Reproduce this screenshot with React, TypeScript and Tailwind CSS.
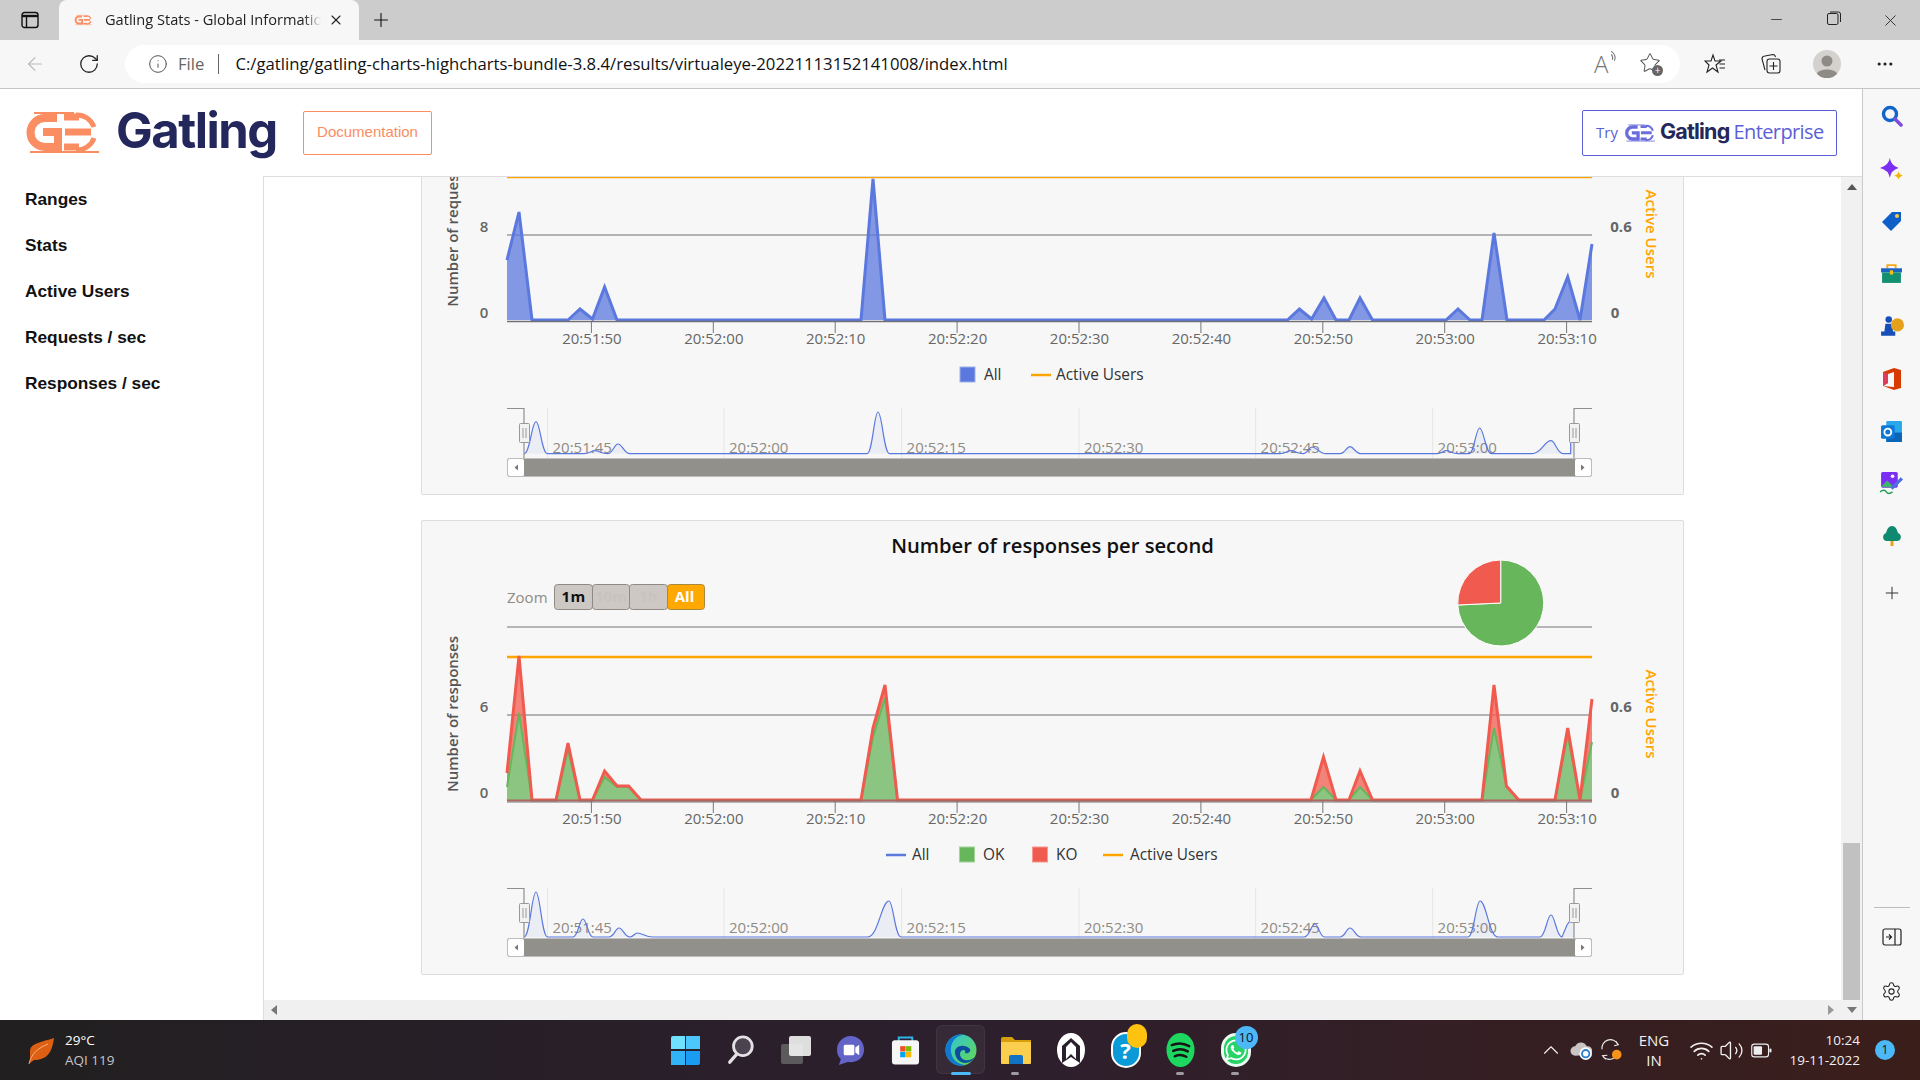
import { ArrowLeft, ChevronUp, Info, Minus, MoreHorizontal, Plus, RotateCw, Settings, Star, Volume2, Wifi, X } from 'lucide-react';
import { FaWhatsapp } from 'react-icons/fa';

type Pt = [number, number];

const X_TICKS: [number, string][] = [
  [591.4, '20:51:50'], [713.3, '20:52:00'], [835.2, '20:52:10'], [957.1, '20:52:20'], [1079, '20:52:30'],
  [1200.9, '20:52:40'], [1322.8, '20:52:50'], [1444.7, '20:53:00'], [1566.6, '20:53:10'],
];
const NAV_TICKS: [number, string][] = [
  [547.5, '20:51:45'], [724, '20:52:00'], [901.6, '20:52:15'], [1079, '20:52:30'], [1255.6, '20:52:45'], [1432.6, '20:53:00'],
];

const FONT = "'Open Sans', sans-serif";

const poly = (pts: Pt[]) => pts.map((p) => p.join(',')).join(' ');
const area = (pts: Pt[], base: number) => `M${pts[0][0]} ${base} L${pts.map((p) => p.join(' ')).join(' L')} L${pts[pts.length - 1][0]} ${base} Z`;

// requests chart, written with its own page y, shifted onto the shared axes
const requestPts: Pt[] = ([
  [507, 260], [519, 212], [532, 320], [568, 320], [580, 309], [592.5, 319], [604.6, 287], [617, 320], [861, 320], [873, 179], [885, 320],
  [1287.5, 320], [1299.4, 309], [1311.6, 319], [1324, 298], [1336, 320], [1349, 320], [1360, 298], [1372.5, 320], [1446, 320], [1458, 309],
  [1470, 320], [1482, 320], [1494, 233], [1507, 320], [1544, 320], [1555, 309], [1567.7, 277], [1580, 320], [1592, 244],
] as Pt[]).map(([x, y]) => [x, y + 480] as Pt);

const koPts: Pt[] = [
  [507, 773], [519, 656], [532, 800], [556, 800], [568, 743], [580, 800], [592.5, 800], [604.6, 771], [617, 786], [628.6, 786], [641, 800],
  [861, 800], [873, 728], [885, 685], [897.5, 800], [1311, 800], [1323.5, 757], [1336, 800], [1349, 800], [1360, 771], [1372.5, 800],
  [1482, 800], [1494, 685], [1506.4, 786], [1518.7, 800], [1555, 800], [1567.7, 728], [1580, 800], [1592, 699],
];
const okPts: Pt[] = [
  [507, 787], [519, 713], [532, 800], [556, 800], [568, 750], [580, 800], [592.5, 800], [604.6, 777], [617, 787], [628.6, 787], [641, 800],
  [861, 800], [873, 737], [885, 698], [897.5, 800], [1311, 800], [1323.5, 787], [1336, 800], [1349, 800], [1360, 787], [1372.5, 800],
  [1482, 800], [1494, 728], [1506.4, 786], [1518.7, 800], [1555, 800], [1567.7, 735], [1580, 800], [1592, 742],
];

// navigator bumps: start x, peak x, end x, peak y
type Bump = [number, number, number, number];
const navPath = (bumps: Bump[], base: number, endX: number) => {
  let d = `M524 ${base}`;
  for (const [a, p, b, y] of bumps) {
    d += ` L${a} ${base} C${a + (p - a) * 0.5} ${base} ${p - (p - a) * 0.35} ${y} ${p} ${y} C${p + (b - p) * 0.35} ${y} ${b - (b - p) * 0.5} ${base} ${b} ${base}`;
  }
  return `${d} L${endX} ${base}`;
};

const navRequests: Bump[] = [
  [524, 536, 547.5, 901.7], [584, 595, 607.5, 930.7], [607.5, 618, 630, 924], [867, 878, 889.6, 892], [1280, 1291, 1303, 930.7],
  [1303, 1312, 1326, 927], [1340, 1350, 1361, 926.7], [1437, 1446, 1458, 930.7], [1469, 1479.6, 1491.5, 908], [1532, 1551, 1563, 920.7],
];
const navResponses: Bump[] = [
  [524, 536, 547.6, 892], [573, 583, 593, 919], [609, 619, 630, 928], [630, 637, 653, 933], [867.5, 889, 901, 901], [1304, 1315, 1324.5, 924],
  [1340, 1350, 1361, 928], [1468, 1480, 1498, 901], [1540, 1551, 1562, 915],
];

function Navigator({ path, tail, base }: { path: string; tail: string; base: number }) {
  return (
    <g>
      {NAV_TICKS.map(([x, t]) => (
        <g key={t}>
          <line x1={x} x2={x} y1={888} y2={938} stroke="#e6e6e6" />
          <text x={x + 5} y={933} fontSize={15} fill="#8f8b85">{t}</text>
        </g>
      ))}
      <path d={`${path} ${tail} L1574 ${base} Z`} fill="#5b78df" fillOpacity={0.07} />
      <path d={`${path} ${tail}`} fill="none" stroke="#5b78df" strokeWidth={1.2} />
      <path d="M507 888.5 H524 V938" fill="none" stroke="#8f8f8f" strokeWidth={1.2} />
      <path d="M1592 888.5 H1574 V938" fill="none" stroke="#8f8f8f" strokeWidth={1.2} />
      <rect x={507.5} y={938.5} width={1084} height={18} fill="#92908a" stroke="#bdbdbd" rx={1.5} />
      <rect x={508} y={939} width={16} height={17} fill="#fff" rx={1.5} />
      <rect x={1575} y={939} width={16} height={17} fill="#fff" rx={1.5} />
      <path d="M518 944.5 v6 l-3.5 -3 z" fill="#777" />
      <path d="M1581 944.5 v6 l3.5 -3 z" fill="#777" />
      {[519, 1569].map((x) => (
        <g key={x}>
          <rect x={x + 0.5} y={903.5} width={10} height={19} fill="#f2f2f2" stroke="#999" rx={1} />
          <path d={`M${x + 4} 908 v10 M${x + 7} 908 v10`} stroke="#999" />
        </g>
      ))}
    </g>
  );
}

function Axes({ yLabel, yTick }: { yLabel: string; yTick: string }) {
  return (
    <g>
      <line x1={507} x2={1592} y1={715} y2={715} stroke="#9c9c9c" strokeWidth={1.7} />
      {X_TICKS.map(([x, t]) => (
        <g key={t}>
          <line x1={x} x2={x} y1={801} y2={813} stroke="#777" />
          <text x={x + 0.5} y={824} fontSize={15} textAnchor="middle" fill="#666">{t}</text>
        </g>
      ))}
      <text x={484} y={712} fontSize={15} textAnchor="middle" fill="#666" fontWeight={600}>{yTick}</text>
      <text x={484} y={798} fontSize={15} textAnchor="middle" fill="#666" fontWeight={600}>0</text>
      <text x={1621} y={712} fontSize={15} textAnchor="middle" fill="#666" fontWeight={700}>0.6</text>
      <text x={1615} y={798} fontSize={15} textAnchor="middle" fill="#666" fontWeight={700}>0</text>
      <text transform="translate(458 714) rotate(-90)" fontSize={15} textAnchor="middle" fill="#555" fontWeight={600}>{yLabel}</text>
      <text transform="translate(1646 714) rotate(90)" fontSize={15} textAnchor="middle" fill="#ffa500" fontWeight={600}>Active Users</text>
    </g>
  );
}

function RequestsChart() {
  return (
    <svg viewBox="422 657 1261 317" className="block w-full h-[317px]" fontFamily={FONT}>
      <Axes yLabel="Number of requests" yTick="8" />
      <line x1={507} x2={1592} y1={657} y2={657} stroke="#ffa500" strokeWidth={2.5} />
      <path d={area(requestPts, 800)} fill="#5b78df" fillOpacity={0.75} />
      <polyline points={poly(requestPts)} fill="none" stroke="#5b78df" strokeWidth={3} />
      <line x1={507} x2={1592} y1={801.5} y2={801.5} stroke="#6f7078" strokeWidth={1.5} />
      <rect x={960} y={847} width={15} height={15} fill="#5b78df" stroke="#9db0ea" />
      <text x={984} y={860} fontSize={15.4} fill="#333">All</text>
      <line x1={1031} x2={1051} y1={855} y2={855} stroke="#ffa500" strokeWidth={2.5} />
      <text x={1056} y={860} fontSize={15.4} fill="#333">Active Users</text>
      <Navigator
        path={navPath(navRequests, 933.7, 1570.7)}
        tail="L1570.7 923 L1574 915"
        base={933.7}
      />
    </svg>
  );
}

function ResponsesChart() {
  return (
    <svg viewBox="422 521 1261 453" className="block w-full h-[453px]" fontFamily={FONT}>
      <text x={1052.5} y={553} fontSize={20.2} fontWeight={600} textAnchor="middle" fill="#111">Number of responses per second</text>
      <text x={507} y={603} fontSize={15} fill="#8f8b85">Zoom</text>
      <rect x={554.5} y={584.5} width={38} height={25} rx={3} fill="#cdc8c4" stroke="#8f8a85" />
      <rect x={592.5} y={584.5} width={37} height={25} rx={3} fill="#cdc8c4" stroke="#8f8a85" />
      <rect x={629.5} y={584.5} width={38} height={25} rx={3} fill="#cdc8c4" stroke="#8f8a85" />
      <rect x={667.5} y={584.5} width={37} height={25} rx={3} fill="#ffa800" stroke="#a88a3f" />
      <text x={573.5} y={601.5} fontSize={15} fontWeight={700} textAnchor="middle" fill="#111" letterSpacing={0.4}>1m</text>
      <text x={611} y={601.5} fontSize={15} fontWeight={700} textAnchor="middle" fill="#c8c3bf">10m</text>
      <text x={648.5} y={601.5} fontSize={15} fontWeight={700} textAnchor="middle" fill="#c8c3bf">1h</text>
      <text x={684.5} y={601.5} fontSize={15} fontWeight={700} textAnchor="middle" fill="#fff">All</text>
      <line x1={507} x2={1592} y1={627} y2={627} stroke="#a0a0a0" strokeWidth={1.6} />
      <Axes yLabel="Number of responses" yTick="6" />
      <line x1={507} x2={1592} y1={657} y2={657} stroke="#ffa500" strokeWidth={2.5} />
      <path d={area(koPts, 800)} fill="#f15b4f" fillOpacity={0.75} />
      <path d={area(okPts, 800)} fill="#8bc581" />
      <polyline points={poly(okPts)} fill="none" stroke="#68b65c" strokeWidth={2} />
      <polyline points={poly(koPts)} fill="none" stroke="#f15b4f" strokeWidth={3} />
      <line x1={507} x2={1592} y1={800.5} y2={800.5} stroke="#b0655f" strokeWidth={2} />
      <line x1={507} x2={1592} y1={802} y2={802} stroke="#777" strokeWidth={1} />
      <path d="M1500.7 603 L1500.7 560 A43 43 0 1 1 1457.8 605 Z" fill="#68b65c" stroke="#fff" />
      <path d="M1500.7 603 L1457.8 605 A43 43 0 0 1 1500.7 560 Z" fill="#f15b4f" stroke="#fff" />
      <line x1={886} x2={906} y1={855} y2={855} stroke="#5b78df" strokeWidth={2.5} />
      <text x={912} y={860} fontSize={15.4} fill="#333">All</text>
      <rect x={959.5} y={847} width={15} height={15} fill="#68b65c" stroke="#a3d29b" />
      <text x={983} y={860} fontSize={15.4} fill="#333">OK</text>
      <rect x={1032.5} y={847} width={15} height={15} fill="#f15b4f" stroke="#f79a92" />
      <text x={1056} y={860} fontSize={15.4} fill="#333">KO</text>
      <line x1={1103} x2={1123} y1={855} y2={855} stroke="#ffa500" strokeWidth={2.5} />
      <text x={1130} y={860} fontSize={15.4} fill="#333">Active Users</text>
      <Navigator path={navPath(navResponses, 937, 1562)} tail="L1567 925 L1574 915" base={937} />
    </svg>
  );
}

function GatlingMark({ color, className }: { color: string; className: string }) {
  return (
    <svg viewBox="0 0 75 41" className={className} fill="none" stroke={color}>
      <path d="M33 6 H21 A14.5 14.5 0 0 0 21 35 H34 V20 H19" strokeWidth={8} />
      <path d="M40 5 H55 M41 20 H67 M40 35 H55" strokeWidth={7} />
      <path d="M52 3 A18 18 0 0 1 70 15 M52 38 A18 18 0 0 0 70 26" strokeWidth={5} />
      <path d="M6 40 H75" strokeWidth={2} />
      <path d="M10 1 H50" strokeWidth={2} />
    </svg>
  );
}

function EdgeIcon() {
  return (
    <svg viewBox="0 0 32 32" className="w-[32px] h-[34px]">
      <defs>
        <linearGradient id="edge-a" x1="0" y1="0" x2="1" y2="1">
          <stop offset="0" stopColor="#2fc4e0" />
          <stop offset="1" stopColor="#66d84a" />
        </linearGradient>
      </defs>
      <circle cx="16" cy="16" r="15.5" fill="url(#edge-a)" />
      <path d="M0.5 16 A15.5 15.5 0 0 1 18 0.7 C10 2 5 9 6 18 C7 26 14 31 21 31 A15.5 15.5 0 0 1 0.5 16 Z" fill="#0f78d0" />
      <path d="M10 19 C9 12 19 9 25 15 C26 18 23 20 20 19 C22 15 15 15 15 20 C15 26 23 29 30 23 C26 31 12 32 10 19 Z" fill="#0c4da0" />
    </svg>
  );
}

function TaskItem({ children, dot, active }: { children: React.ReactNode; dot?: boolean; active?: boolean }) {
  return (
    <div className="relative w-[55px] h-[60px] flex items-center justify-center">
      {active && <div className="absolute left-[3px] top-[5px] w-[49px] h-[49px] rounded-md bg-white/5 border border-white/5" />}
      <div className="relative flex items-center justify-center">{children}</div>
      {dot && <div className="absolute bottom-[5px] left-[23px] w-[8px] h-[3px] rounded-full bg-[#a09ba0]" />}
      {active && <div className="absolute bottom-[5px] left-[17.5px] w-[20px] h-[3px] rounded-full bg-[#4db8f8]" />}
    </div>
  );
}

function Taskbar() {
  return (
    <div className="h-[60px] flex items-center bg-linear-to-r from-[#211f20] via-[#2d1f2e] to-[#3a1e1a] text-white font-['Open_Sans',sans-serif]">
      <div className="w-[658px] flex items-center pl-[28px] gap-[11px]">
        <svg viewBox="0 0 26 28" className="w-[26px] h-[28px]">
          <path d="M26 2 C24 18 18 24 6 24 L2 27 L2 14 C3 7 14 6 26 2 Z" fill="#dd5f14" />
          <path d="M1 28 C3 18 10 12 20 8" stroke="#f7b27a" fill="none" />
        </svg>
        <div className="flex flex-col leading-[20px] text-[13.5px]">
          <span>29°C</span>
          <span className="text-[#c8c4c8]">AQI 119</span>
        </div>
      </div>
      <TaskItem>
        <div className="grid grid-cols-2 gap-[1.5px] w-[29px] h-[29px]">
          <div className="bg-[#6fe2ff] rounded-tl-[2px]" />
          <div className="bg-[#4cc7fb]" />
          <div className="bg-[#33b3f7]" />
          <div className="bg-[#1a9cf3] rounded-br-[2px]" />
        </div>
      </TaskItem>
      <TaskItem>
        <svg viewBox="0 0 28 32" className="w-[28px] h-[30px]">
          <circle cx="16" cy="12" r="10" fill="#4c4350" stroke="#e4e2e4" strokeWidth="3" />
          <path d="M9 21 L2 29" stroke="#e4e2e4" strokeWidth="3.5" strokeLinecap="round" />
        </svg>
      </TaskItem>
      <TaskItem>
        <div className="relative w-[30px] h-[28px]">
          <div className="absolute left-0 bottom-0 w-[22px] h-[20px] rounded-[2px] bg-[#5c5a5c]" />
          <div className="absolute right-0 top-0 w-[22px] h-[20px] rounded-[2px] bg-[#f3f3f3]/90" />
        </div>
      </TaskItem>
      <TaskItem>
        <svg viewBox="0 0 30 32" className="w-[29px] h-[31px]">
          <path d="M15 1 C24 1 29 8 29 15 C29 24 22 29 12 28 L3 31 L5 25 C2 22 1 19 1 15 C1 8 7 1 15 1 Z" fill="#6264c8" />
          <rect x="8" y="10" width="11" height="11" rx="1.5" fill="#fff" />
          <path d="M20 13 L24 10 V21 L20 18 Z" fill="#fff" />
        </svg>
      </TaskItem>
      <TaskItem>
        <svg viewBox="0 0 30 32" className="w-[29px] h-[32px]">
          <path d="M8 8 V3 H22 V8" fill="none" stroke="#2db4e8" strokeWidth="2" />
          <rect x="1" y="6" width="28" height="25" rx="3" fill="#f6f6f6" />
          <rect x="9.5" y="12" width="5.5" height="5.5" fill="#f25022" />
          <rect x="15.5" y="12" width="5.5" height="5.5" fill="#7fba00" />
          <rect x="9.5" y="18" width="5.5" height="5.5" fill="#00a4ef" />
          <rect x="15.5" y="18" width="5.5" height="5.5" fill="#ffb900" />
        </svg>
      </TaskItem>
      <TaskItem active>
        <EdgeIcon />
      </TaskItem>
      <TaskItem dot>
        <svg viewBox="0 0 30 28" className="w-[30px] h-[28px]">
          <path d="M0 3 Q0 1 2 1 H11 L14 4 H30 V8 H0 Z" fill="#d99e0b" />
          <rect x="0" y="6" width="30" height="22" rx="1" fill="#fbcf4d" />
          <path d="M8 28 V21 Q8 19 10 19 H20 Q22 19 22 21 V28 Z" fill="#1272c4" />
        </svg>
      </TaskItem>
      <TaskItem>
        <svg viewBox="0 0 30 36" className="w-[30px] h-[36px]">
          <ellipse cx="15" cy="18" rx="14" ry="17" fill="#fff" />
          <path d="M6 31 V14 L15 6 L24 14 V31 L15 25 Z" fill="#2a1f2c" />
          <path d="M10 27 V15 L15 10 L20 15 V27 L15 22 Z" fill="#fff" />
        </svg>
      </TaskItem>
      <TaskItem>
        <div className="relative w-[30px] h-[36px] rounded-full bg-[#0a9ad8] border-2 border-white flex items-center justify-center text-[22px] font-bold text-white">?</div>
        <div className="absolute -right-[6px] -top-[8px] w-[20px] h-[24px] rounded-full bg-[#ffc20e]" />
      </TaskItem>
      <TaskItem dot>
        <svg viewBox="0 0 30 36" className="w-[29px] h-[36px]">
          <ellipse cx="15" cy="18" rx="14.5" ry="17.5" fill="#1ed760" />
          <path d="M6 13 Q15 9 24 14 M7.5 19 Q15 15 22.5 19.5 M9 24.5 Q15 21.5 21 25" fill="none" stroke="#151515" strokeWidth="2.6" strokeLinecap="round" />
        </svg>
      </TaskItem>
      <TaskItem dot>
        <div className="w-[30px] h-[34px] rounded-full bg-[#25d366] border-[3px] border-white/90 flex items-center justify-center">
          <FaWhatsapp className="w-[24px] h-[24px] text-white" />
        </div>
        <div className="absolute -right-[7px] -top-[7px] w-[23px] h-[23px] rounded-full bg-[#4db8f8] text-[#111] text-[13px] flex items-center justify-center">10</div>
      </TaskItem>
      <div className="ml-auto w-[384px] flex items-center text-[#f2f0f0]">
        <div className="w-[30px] flex justify-center"><ChevronUp className="w-[26px] h-[26px]" strokeWidth={1} /></div>
        <div className="w-[30px] flex justify-center">
          <svg viewBox="0 0 22 20" className="w-[25px] h-[21px]">
            <path d="M5 15 A4.5 4.5 0 0 1 5 6 A6 6 0 0 1 16 6 A4 4 0 0 1 18 14 Z" fill="#c9c5c5" />
            <circle cx="15" cy="13" r="6" fill="#fff" />
            <circle cx="15" cy="13" r="3.5" fill="none" stroke="#2a7fd0" strokeWidth="1.8" />
          </svg>
        </div>
        <div className="w-[30px] flex justify-center">
          <svg viewBox="0 0 22 22" className="w-[23px] h-[23px]">
            <path d="M2 10 A8 8 0 0 1 17 5 M15 2 L17.5 5.5 L13.5 6.5 M16 15 A8 8 0 0 1 3 17 M5.5 19.5 L2.5 16 L7 15.5" fill="none" stroke="#eee" strokeWidth="1.1" />
            <circle cx="16" cy="15" r="4.6" fill="#f7931a" />
          </svg>
        </div>
        <div className="w-[56px] flex flex-col items-center leading-[20px] text-[15px]">
          <span>ENG</span>
          <span>IN</span>
        </div>
        <div className="w-[30px] ml-[4px] flex justify-center"><Wifi className="w-[25px] h-[25px]" strokeWidth={1.6} /></div>
        <div className="w-[30px] flex justify-center"><Volume2 className="w-[25px] h-[25px]" strokeWidth={1.3} /></div>
        <div className="w-[30px] flex justify-center">
          <svg viewBox="0 0 20 14" className="w-[21px] h-[15px]">
            <rect x="0.7" y="1" width="16" height="12" rx="2.5" fill="none" stroke="#eee" strokeWidth="1.1" />
            <rect x="2.5" y="3" width="8" height="8" rx="1" fill="#eee" />
            <rect x="17.5" y="5" width="2" height="4" rx="1" fill="#eee" />
          </svg>
        </div>
        <div className="w-[84px] flex flex-col items-end leading-[20px] text-[13.5px]">
          <span>10:24</span>
          <span>19-11-2022</span>
        </div>
        <div className="w-[50px] flex justify-center">
          <div className="w-[20px] h-[20px] rounded-full bg-[#4db8f8] text-[#111] text-[12px] flex items-center justify-center">1</div>
        </div>
      </div>
    </div>
  );
}

function SideIcon({ children }: { children: React.ReactNode }) {
  return <div className="h-[52.5px] flex items-center justify-center">{children}</div>;
}

function EdgeSidebar() {
  return (
    <aside className="w-[58px] bg-[#f7f7f7] border-l border-[#c9c9c9] flex flex-col items-center pt-px">
      <SideIcon>
        <svg viewBox="0 0 22 22" className="w-[22px] h-[22px]">
          <circle cx="9" cy="9" r="6.5" fill="none" stroke="#1166cc" strokeWidth="3.4" />
          <path d="M14 14 L20 20" stroke="#7c4dd8" strokeWidth="3.6" strokeLinecap="round" />
        </svg>
      </SideIcon>
      <SideIcon>
        <svg viewBox="0 0 22 22" className="w-[24px] h-[24px]">
          <path d="M9 1 Q10 8 17 10 Q10 12 9 19 Q8 12 0 10 Q8 8 9 1 Z" fill="#7b2ff2" />
          <path d="M17 13 Q17.5 16 21 17 Q17.5 18 17 21 Q16.5 18 13 17 Q16.5 16 17 13 Z" fill="#f5b50a" />
        </svg>
      </SideIcon>
      <SideIcon>
        <svg viewBox="0 0 22 22" className="w-[22px] h-[22px]">
          <path d="M11 2 H20 V11 L10 21 L1 12 Z" fill="#0f5fc9" />
          <circle cx="16" cy="6" r="2" fill="#ffc83d" />
        </svg>
      </SideIcon>
      <SideIcon>
        <svg viewBox="0 0 22 20" className="w-[23px] h-[21px]">
          <path d="M7 5 V2 H15 V5" fill="none" stroke="#f2a81d" strokeWidth="1.8" />
          <rect x="1" y="5" width="20" height="4" fill="#1a62c4" />
          <rect x="2" y="9" width="18" height="10" fill="#12906f" />
          <rect x="9.5" y="7" width="3" height="4" fill="#f2c21d" />
        </svg>
      </SideIcon>
      <SideIcon>
        <svg viewBox="0 0 22 20" className="w-[24px] h-[22px]">
          <circle cx="8" cy="4" r="3" fill="#174fb8" />
          <path d="M5 8 H11 L12 15 H14 V19 H1 V15 H4 Z" fill="#174fb8" />
          <circle cx="16" cy="9" r="6" fill="#e6a11c" />
        </svg>
      </SideIcon>
      <SideIcon>
        <svg viewBox="0 0 22 24" className="w-[22px] h-[24px]">
          <path d="M2 5 L13 1 L20 3 V21 L13 23 L2 19 L13 20 V5 L7 7 V16 L2 19 Z" fill="#d83b01" />
          <path d="M2 5 L7 7 V16 L2 19 Z" fill="#e03a5c" />
        </svg>
      </SideIcon>
      <SideIcon>
        <svg viewBox="0 0 22 22" className="w-[23px] h-[23px]">
          <rect x="6" y="1" width="15" height="20" rx="1" fill="#28a8ea" />
          <path d="M6 12 H21 V21 H6 Z" fill="#0a64b8" />
          <rect x="1" y="5" width="13" height="13" rx="1.5" fill="#0f78d4" />
          <circle cx="7.5" cy="11.5" r="3.3" fill="none" stroke="#fff" strokeWidth="1.8" />
        </svg>
      </SideIcon>
      <SideIcon>
        <svg viewBox="0 0 24 24" className="w-[25px] h-[25px]">
          <rect x="2" y="1" width="16" height="15" rx="1.5" fill="#7b2ff2" />
          <path d="M2 15 L8 9 L15 16 Z" fill="#3fb56a" />
          <circle cx="13" cy="5" r="1.7" fill="#fff" />
          <path d="M12 17 L22 7" stroke="#4c6ee6" strokeWidth="3" />
          <path d="M1 20 Q5 17 7 20 T13 20" stroke="#1f9d55" fill="none" strokeWidth="1.4" />
        </svg>
      </SideIcon>
      <SideIcon>
        <svg viewBox="0 0 22 22" className="w-[22px] h-[22px]">
          <path d="M11 1 C15 1 16 5 17 8 C21 9 21 16 16 16 H6 C1 16 1 9 5 8 C6 5 7 1 11 1 Z" fill="#0f8a70" />
          <rect x="9.5" y="16" width="3" height="5" fill="#e8a317" />
        </svg>
      </SideIcon>
      <Plus className="w-[20px] h-[20px] text-[#333] mt-[20.5px]" strokeWidth={1.2} />
      <div className="mt-auto w-[36px] border-t border-[#bdbdbd]" />
      <svg viewBox="0 0 20 18" className="w-[20px] h-[18px] mt-[20px] mb-[35px]" fill="none" stroke="#222" strokeWidth="1.2">
        <rect x="1" y="1" width="18" height="16" rx="2" />
        <path d="M13 1 V17 M4 9 H9 M7 6.5 L9.5 9 L7 11.5" />
      </svg>
      <Settings className="w-[21px] h-[21px] text-[#222] mb-[18px]" strokeWidth={1.2} />
    </aside>
  );
}

export default function App() {
  return (
    <div className="w-[1920px] h-[1080px] flex flex-col overflow-hidden bg-white font-['Open_Sans',sans-serif] text-[#222]">
      {/* tab strip */}
      <div className="h-10 flex items-center bg-[#cccccc] shrink-0">
        <div className="w-[59px] flex justify-center">
          <svg viewBox="0 0 18 18" className="w-[18px] h-[18px]" fill="none" stroke="#111" strokeWidth="1.4">
            <rect x="1" y="1.5" width="16" height="15" rx="2.5" />
            <path d="M1 5 H17" strokeWidth="2.4" />
            <path d="M5.5 5 V16" />
          </svg>
        </div>
        <div className="w-[300px] h-10 bg-[#f7f7f7] rounded-t-lg flex items-center pl-[15px]">
          <GatlingMark color="#fb8d62" className="w-[18px] h-[12px] shrink-0" />
          <span className="ml-[13px] w-[216px] overflow-hidden whitespace-nowrap text-[14.6px] text-[#222] [mask-image:linear-gradient(to_right,black_92%,transparent)]">Gatling Stats - Global Information</span>
          <X className="w-[16px] h-[16px] ml-[7px] shrink-0 text-[#222]" strokeWidth={1.6} />
        </div>
        <Plus className="ml-[11px] w-[22px] h-[22px] text-[#111]" strokeWidth={1.2} />
        <div className="ml-auto flex mr-[1px]">
          <div className="w-[57px] flex justify-center"><Minus className="w-[17px] h-[17px] text-[#222]" strokeWidth={1.1} /></div>
          <div className="w-[57px] flex justify-center">
            <svg viewBox="0 0 14 14" className="w-[14px] h-[14px]" fill="none" stroke="#222">
              <rect x="0.5" y="2.5" width="10.5" height="11" rx="1.5" />
              <path d="M3 1 H11.5 Q13.5 1 13.5 3 V11" />
            </svg>
          </div>
          <div className="w-[57px] flex justify-center"><X className="w-[19px] h-[19px] text-[#222]" strokeWidth={1.1} /></div>
        </div>
      </div>

      {/* toolbar */}
      <div className="h-[49px] flex items-center bg-[#f7f7f7] border-b border-[#c4c4c4] shrink-0">
        <div className="w-[125px] flex items-center pl-[24px] gap-[32px]">
          <ArrowLeft className="w-[22px] h-[22px] text-[#bbb]" strokeWidth={1.3} />
          <RotateCw className="w-[22px] h-[22px] text-[#222]" strokeWidth={1.4} />
        </div>
        <div className="w-[1555px] h-[38px] rounded-full bg-white flex items-center pl-[23px]">
          <Info className="w-[20px] h-[20px] text-[#555]" strokeWidth={1.2} />
          <span className="ml-[10px] text-[16.7px] text-[#666]">File</span>
          <div className="ml-[14px] h-[20px] border-l border-[#666]" />
          <span className="ml-[16px] text-[16.7px] text-[#111]">C:/gatling/gatling-charts-highcharts-bundle-3.8.4/results/virtualeye-20221113152141008/index.html</span>
          <div className="ml-auto flex items-center">
            <div className="relative w-[28px] h-[26px] text-[#777] text-[24px] leading-[26px] font-light">
              A
              <svg viewBox="0 0 8 12" className="absolute left-[16px] -top-[1px] w-[9px] h-[13px]" fill="none" stroke="#777">
                <path d="M1 1 Q6 5 4 10 M1 4 Q3 6 2 9" />
              </svg>
            </div>
            <div className="relative ml-[17px] mr-[17px] w-[24px] h-[24px]">
              <Star className="w-[22px] h-[22px] text-[#555]" strokeWidth={1.1} />
              <div className="absolute right-0 bottom-0 w-[11px] h-[11px] rounded-full bg-[#666] text-white text-[10px] leading-[10px] text-center">+</div>
            </div>
          </div>
        </div>
        <div className="ml-[7px] flex items-center">
          <div className="w-[56px] flex justify-center">
            <svg viewBox="0 0 22 22" className="w-[22px] h-[22px]" fill="none" stroke="#222" strokeWidth="1.1">
              <path d="M9 2 L11 8 H17 L12 12 L14 19 L8.5 15 L3 19 L5 12 L1 8 H7 Z" />
              <path d="M15 7 H21 M15.5 11 H21 M15.5 15 H21" />
            </svg>
          </div>
          <div className="w-[55px] flex justify-center">
            <svg viewBox="0 0 22 22" className="w-[22px] h-[22px]" fill="none" stroke="#222" strokeWidth="1.1">
              <path d="M5 17 L2 6 Q2 3 5 3 L13 1.5 Q15 1.5 15.5 4" />
              <rect x="7" y="6" width="13" height="14" rx="2.5" />
              <path d="M13.5 9 V17 M9.5 13 H17.5" />
            </svg>
          </div>
          <div className="w-[58px] flex justify-center">
            <svg viewBox="0 0 28 28" className="w-[28px] h-[28px]">
              <circle cx="14" cy="14" r="14" fill="#d4d2cf" />
              <circle cx="14" cy="11" r="5.5" fill="#8e8b87" />
              <path d="M4 24 C5 18 23 18 24 24 A14 14 0 0 1 4 24 Z" fill="#8e8b87" />
            </svg>
          </div>
          <div className="w-[58px] flex justify-center"><MoreHorizontal className="w-[20px] h-[20px] text-[#222]" strokeWidth={1.8} /></div>
        </div>
      </div>

      <div className="flex-1 min-h-0 flex">
        <div className="w-[1862px] flex flex-col">
          {/* gatling header */}
          <header className="h-[88px] shrink-0 flex items-center pl-[23px] pr-[25px] border-b border-[#dddddd] bg-white font-['Liberation_Sans',Arial,sans-serif]">
            <GatlingMark color="#fb8d62" className="w-[77px] h-[41px]" />
            <span className="ml-[16px] w-[162px] -mt-1 font-['Inter',sans-serif] font-bold text-[49px] leading-none tracking-[-1.5px] text-[#23275c]">Gatling</span>
            <button className="ml-[25px] w-[129px] h-[44px] border border-[#fb8d62] rounded-[2px] text-[15px] text-[#fb8d62]">Documentation</button>
            <button className="ml-auto w-[255px] h-[46px] border border-[#5b5fd6] rounded-[2px] flex items-center pl-[13px] text-[#5b5fd6]">
              <span className="text-[15px] font-['Open_Sans',sans-serif]">Try</span>
              <GatlingMark color="#6a6edc" className="ml-[6px] w-[31px] h-[20px]" />
              <span className="ml-[5px] -mt-0.5 font-['Inter',sans-serif] font-bold text-[21.5px] tracking-[-0.8px] text-[#23275c]">Gatling</span>
              <span className="ml-[4px] -mt-0.5 font-['Open_Sans',sans-serif] text-[20px] tracking-[-0.6px]">Enterprise</span>
            </button>
          </header>

          <div className="flex-1 min-h-0 flex">
            <nav className="w-[264px] shrink-0 border-r border-[#dddddd] bg-white pl-[25px] -mt-px font-['Liberation_Sans',Arial,sans-serif] text-[17.3px] font-bold text-[#111]">
              {['Ranges', 'Stats', 'Active Users', 'Requests / sec', 'Responses / sec'].map((item) => (
                <div key={item} className="h-[46px] leading-[46px]">{item}</div>
              ))}
            </nav>
            <div className="flex-1 min-w-0 flex">
              <div className="flex-1 min-w-0 flex flex-col">
                <main className="flex-1 min-h-0 overflow-hidden pl-[157px]">
                  <section className="w-[1263px] bg-[#f7f7f7] border-x border-b border-[#dddddd] rounded-b-[2px]">
                    <RequestsChart />
                  </section>
                  <section className="mt-[25px] w-[1263px] bg-[#f7f7f7] border border-[#dddddd] rounded-[2px]">
                    <ResponsesChart />
                  </section>
                </main>
                <div className="h-[20px] bg-[#f0f0f0] flex items-center justify-between px-[7px]">
                  <div className="w-0 h-0 border-y-[5px] border-y-transparent border-r-[6px] border-r-[#777]" />
                  <div className="w-0 h-0 border-y-[5px] border-y-transparent border-l-[6px] border-l-[#999]" />
                </div>
              </div>
              <div className="w-[21px] bg-[#f1f1f1] flex flex-col items-center">
                <div className="mt-[7px] w-0 h-0 border-x-[5px] border-x-transparent border-b-[6px] border-b-[#555]" />
                <div className="mt-auto w-[17px] h-[157px] bg-[#c1c1c1]" />
                <div className="h-[20px] flex items-center">
                  <div className="w-0 h-0 border-x-[5px] border-x-transparent border-t-[6px] border-t-[#777]" />
                </div>
              </div>
            </div>
          </div>
        </div>
        <EdgeSidebar />
      </div>

      <Taskbar />
    </div>
  );
}
